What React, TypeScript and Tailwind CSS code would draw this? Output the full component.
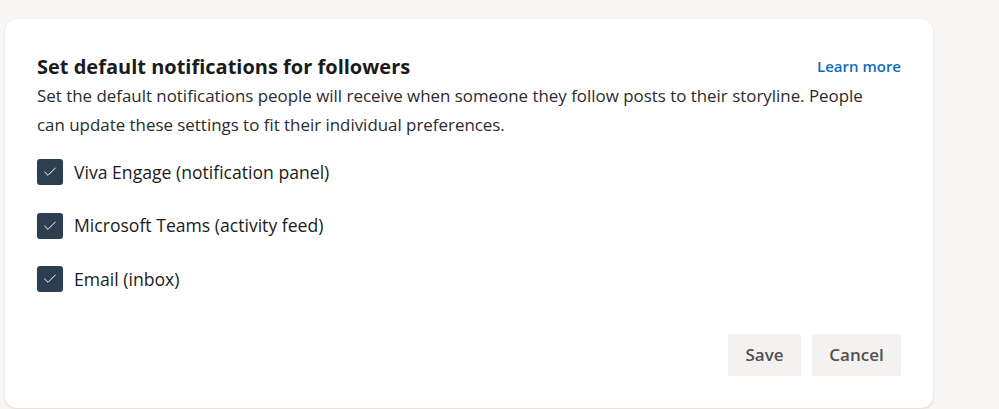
import { Check } from "lucide-react";

const options = [
  "Viva Engage (notification panel)",
  "Microsoft Teams (activity feed)",
  "Email (inbox)",
];

export default function App() {
  return (
    <div className="w-[999px] h-[409px] bg-[#f8f7f6] overflow-hidden pt-[19px] pl-[5px] font-['Open_Sans',sans-serif]">
      <div className="w-[928px] h-[389px] bg-white rounded-[12px] shadow-[0_1px_3px_rgba(0,0,0,0.12)] px-[32px] pt-[34px] flex flex-col">
        <div className="flex items-start justify-between">
          <h1 className="text-[20px] leading-[27px] font-bold text-[#1b1b1b]">Set default notifications for followers</h1>
          <a className="text-[15px] leading-[27px] font-semibold text-[#0f6cbd]">Learn more</a>
        </div>
        <p className="text-[16.9px] leading-[29px] text-[#2b2b2b] pr-[30px] mt-[1px]">
          Set the default notifications people will receive when someone they follow posts to their storyline. People can update these settings to fit their individual preferences.
        </p>
        <div className="flex flex-col gap-[27px] mt-[20px]">
          {options.map((o) => (
            <label key={o} className="flex items-center gap-[11px]">
              <span className="w-[26px] h-[26px] rounded-[3px] bg-[#2c3e50] flex items-center justify-center">
                <Check className="w-[16px] h-[16px] text-white" strokeWidth={1.5} />
              </span>
              <span className="text-[17.6px] text-[#1b1b1b]">{o}</span>
            </label>
          ))}
        </div>
        <div className="flex justify-end gap-[11px] mt-auto mb-[32px]">
          <button className="w-[73px] h-[42px] rounded-[3px] bg-[#f3f2f1] text-[17px] font-semibold text-[#505050]">Save</button>
          <button className="w-[89px] h-[42px] rounded-[3px] bg-[#f3f2f1] text-[17px] font-semibold text-[#505050]">Cancel</button>
        </div>
      </div>
    </div>
  );
}
